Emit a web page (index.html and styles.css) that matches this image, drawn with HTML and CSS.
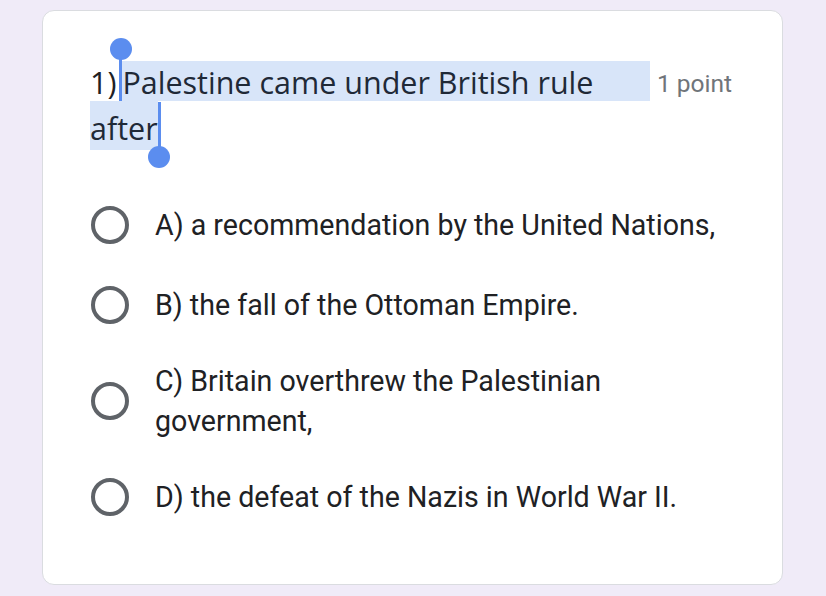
FILE: index.html
```html
<!DOCTYPE html>
<html>
<head>
<meta charset="utf-8">
<link rel="stylesheet" href="styles.css">
</head>
<body>
<div class="card">
  <div class="header">
    <div class="title">
      <div class="line1"><span class="num">1)</span><span class="sel fill"><span class="handle start"></span>Palestine came under British rule</span></div>
      <div class="line2"><span class="sel">after<span class="handle end"></span></span></div>
    </div>
    <div class="points">1 point</div>
  </div>
  <div class="options">
    <div class="opt"><span class="radio"></span><span class="label">A) a recommendation by the United Nations,</span></div>
    <div class="opt"><span class="radio"></span><span class="label">B) the fall of the Ottoman Empire.</span></div>
    <div class="opt"><span class="radio"></span><span class="label">C) Britain overthrew the Palestinian government,</span></div>
    <div class="opt"><span class="radio"></span><span class="label">D) the defeat of the Nazis in World War II.</span></div>
  </div>
</div>
</body>
</html>
```
FILE: styles.css
```css
html, body { margin: 0; padding: 0; }
body {
  background: #f0ebf8;
  width: 826px;
  height: 596px;
  overflow: hidden;
  font-family: Roboto, "Liberation Sans", sans-serif;
  padding-top: 10px;
  box-sizing: border-box;
}
.card {
  margin-left: 42px;
  width: 741px;
  height: 575px;
  box-sizing: border-box;
  background: #fff;
  border: 1px solid #dadce0;
  border-radius: 12px;
  padding: 50px 0 0 47px;
}
.header {
  display: flex;
  align-items: flex-start;
}
.title {
  width: 560px;
  font-family: "Open Sans", Roboto, sans-serif;
  font-size: 30.5px;
  color: #202124;
}
.line1 {
  display: flex;
  height: 40px;
  line-height: 42px;
}
.line1 .fill { flex: 1; padding-left: 2px; }
.line2 {
  height: 49px;
  line-height: 54px;
}
.sel {
  position: relative;
  background: #d8e5f9;
  color: #1f2937;
  display: inline-block;
}
.line1 .sel { height: 40px; }
.line2 .sel { height: 49px; }
.num { display: inline-block; margin-right: 4px; }
.handle {
  position: absolute;
  width: 3px;
  background: #5b8def;
}
.handle::after {
  content: "";
  position: absolute;
  width: 22px;
  height: 22px;
  border-radius: 50%;
  background: #5b8def;
  left: -9.5px;
}
.handle.start {
  left: -1px;
  top: -12px;
  height: 52px;
}
.handle.start::after { top: -11px; }
.handle.end {
  right: -3px;
  top: 1px;
  height: 48px;
}
.handle.end::after { bottom: -18px; }
.points {
  margin-left: 7px;
  margin-top: 8px;
  font-size: 24.5px;
  color: #70757a;
  line-height: 30px;
}
.options {
  margin-top: 35px;
  display: flex;
  flex-direction: column;
}
.opt {
  display: flex;
  align-items: center;
  min-height: 80px;
}
.opt:nth-child(3) { min-height: 112px; }
.radio {
  width: 30px;
  height: 30px;
  border: 4px solid #5f6368;
  border-radius: 50%;
  flex: none;
  margin-left: 1px;
}
.label {
  margin-left: 26px;
  width: 580px;
  font-size: 28.6px;
  line-height: 40px;
  color: #202124;
}
```
